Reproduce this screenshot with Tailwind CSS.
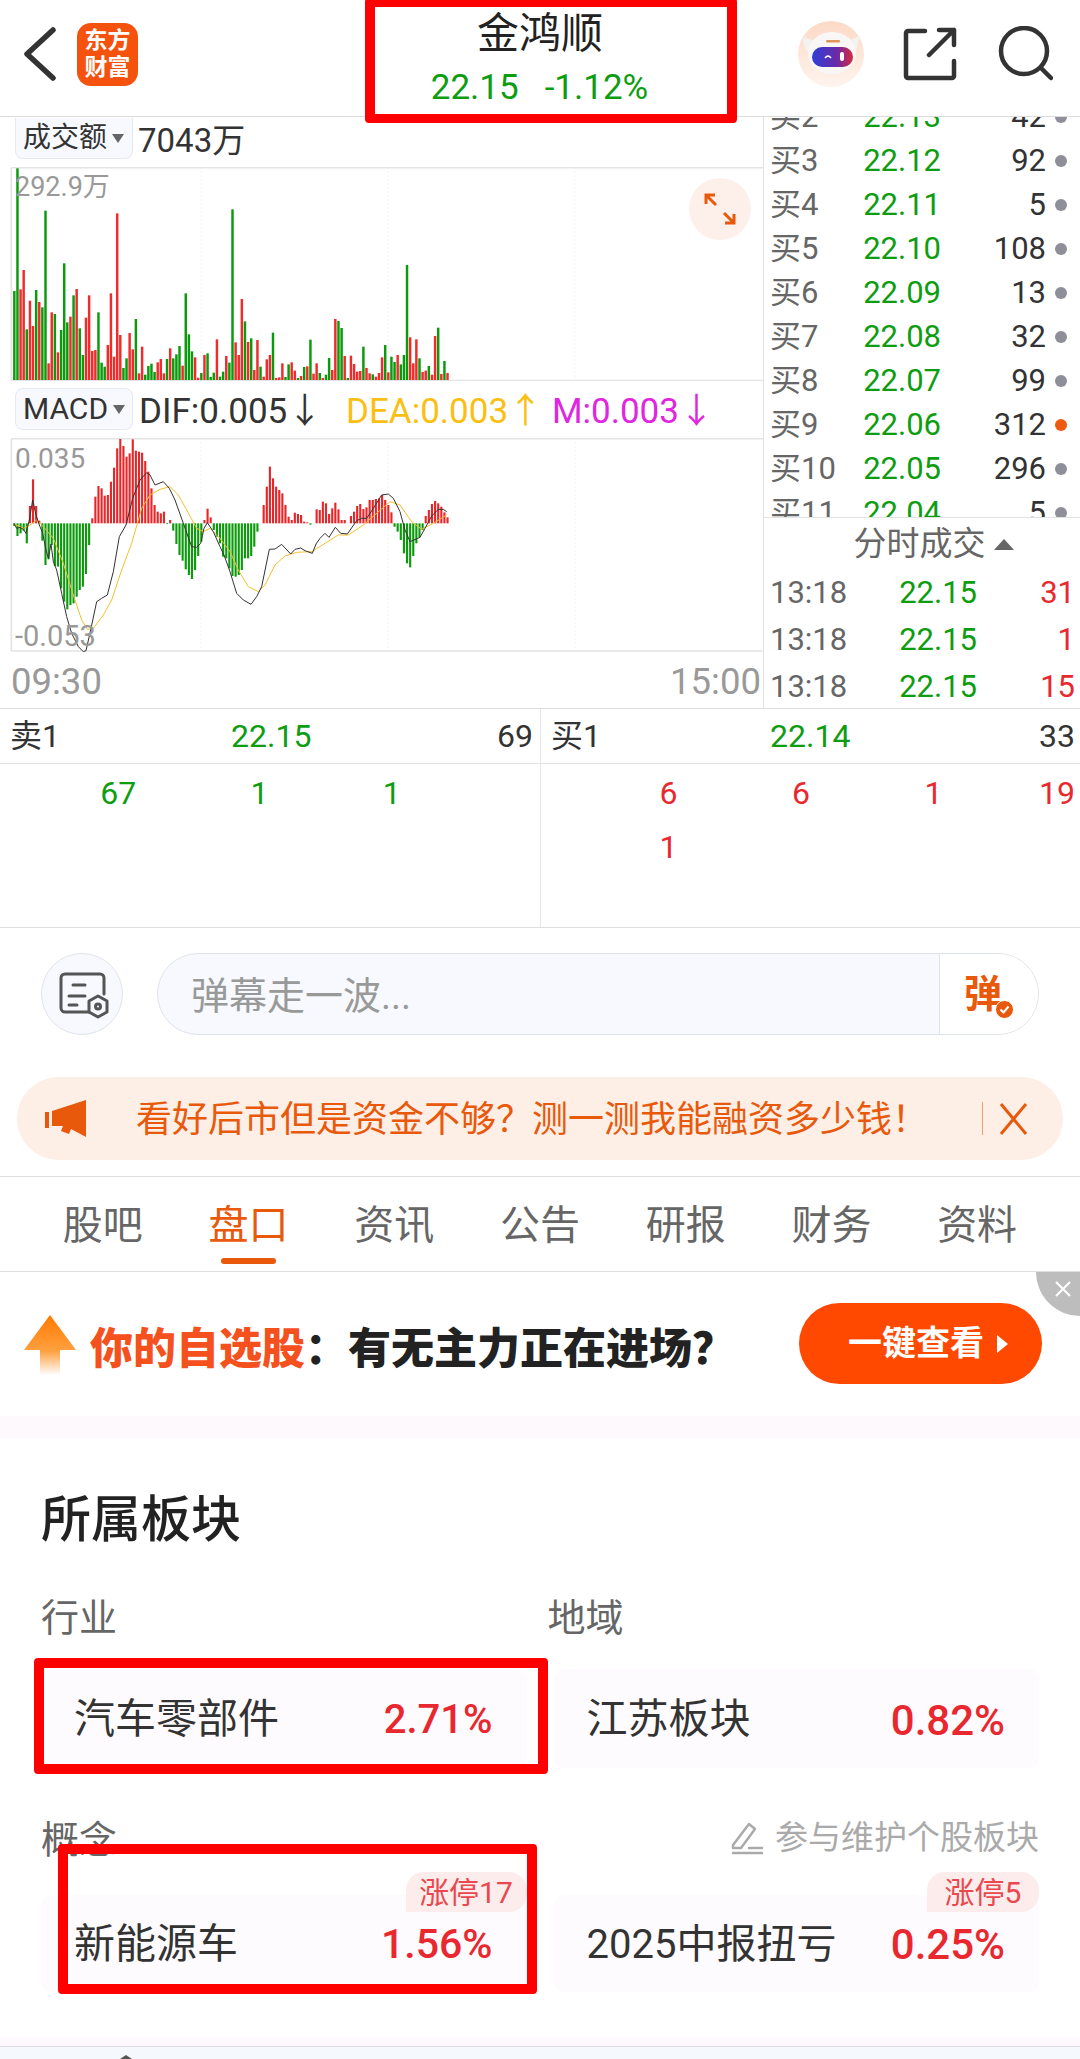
<!DOCTYPE html>
<html lang="zh-CN">
<head>
    <meta charset="UTF-8">
    <meta name="viewport" content="width=device-width, initial-scale=1.0">
    <title>金鸿顺</title>
    <script src="https://cdn.jsdelivr.net/npm/@tailwindcss/browser@4"></script>
</head>
<body class="bg-white">
<div class="relative w-[1080px] h-[2059px] overflow-hidden bg-white text-[#333] font-['Roboto','Noto_Sans_CJK_SC',sans-serif]">

    <!-- Header -->
    <header class="grid grid-cols-[365px_350px_365px] h-[117px] border-b border-[#dcdcdc]">
        <div class="flex items-center pl-[23px] pb-[8px]">
            <svg class="w-[34px] h-[54px]" viewBox="0 0 34 54" fill="none" stroke="#333" stroke-width="5.5" stroke-linecap="round" stroke-linejoin="round"><path d="M30 3 L4 27 L30 51"/></svg>
            <div class="ml-[20px] w-[61px] h-[63px] rounded-[14px] bg-[#f4520d] text-white text-[23px] font-bold leading-[27px] text-center flex flex-col justify-center"><span>东方</span><span>财富</span></div>
        </div>
        <div class="flex flex-col items-center pt-[12px]">
            <div class="text-[42px] leading-[44px] text-[#222]">金鸿顺</div>
            <div class="mt-[12px] -ml-[1px] text-[35px] leading-[40px] text-[#0e9d11]"><span>22.15</span><span class="ml-[26px]">-1.12%</span></div>
        </div>
        <div class="flex items-center justify-end pr-[27px] pb-[8px]">
            <svg class="w-[66px] h-[66px]" viewBox="0 0 66 66">
                <defs>
                    <linearGradient id="robotBg" x1="0" y1="0" x2="0" y2="1"><stop offset="0" stop-color="#fcd9c6"/><stop offset="1" stop-color="#fef4ee"/></linearGradient>
                    <linearGradient id="visor" x1="0" y1="0" x2="1" y2="0"><stop offset="0" stop-color="#2f3fd8"/><stop offset="0.6" stop-color="#6a2aa8"/><stop offset="1" stop-color="#d92a3c"/></linearGradient>
                </defs>
                <circle cx="33" cy="33" r="33" fill="url(#robotBg)"/>
                <path d="M4 16 L14 19 L52 19 L62 15 L58 30 L8 30 Z" fill="#f4f2f0"/>
                <ellipse cx="34" cy="32" rx="24" ry="21" fill="#f8f7f6"/>
                <rect x="28" y="19" width="14" height="2.5" rx="1" fill="#e0965a"/>
                <rect x="14" y="26" width="41" height="20" rx="10" fill="url(#visor)"/>
                <path d="M27 37 q3 -4 6 0" fill="none" stroke="#fff" stroke-width="1.6"/>
                <rect x="42" y="31" width="4" height="9" rx="2" fill="#fff"/>
            </svg>
            <svg class="ml-[39px] w-[54px] h-[54px]" viewBox="0 0 54 54" fill="none" stroke="#333" stroke-width="4.5" stroke-linecap="round" stroke-linejoin="round">
                <path d="M22 4 H5 a2 2 0 0 0 -2 2 V49 a2 2 0 0 0 2 2 H49 a2 2 0 0 0 2 -2 V34"/>
                <path d="M26 28 L51 3 M36 3 H51 V18"/>
            </svg>
            <svg class="ml-[40px] w-[56px] h-[56px]" viewBox="0 0 56 56" fill="none" stroke="#333" stroke-width="4.5" stroke-linecap="round"><circle cx="27" cy="25" r="23"/><path d="M44 42 L54 52"/></svg>
        </div>
    </header>

    <!-- Charts + order book -->
    <section class="flex h-[591px]">
        <div class="w-[763px] shrink-0">
            <div class="h-[50px] flex items-start pl-[15px]">
                <div class="mt-[1px] w-[118px] h-[41px] rounded-b-lg bg-[#f7f9fe] border border-t-0 border-[#e4e8f0] flex items-center pl-[7px] text-[28px] leading-none">成交额<span class="ml-[5px] w-0 h-0 border-x-[6px] border-x-transparent border-t-[9px] border-t-[#666]"></span></div>
                <span class="ml-[5px] mt-[3px] text-[33px] leading-[42px]">7043万</span>
            </div>
            <div class="relative h-[214px]">
                <svg id="volChart" class="block w-[763px] h-[214px]" viewBox="0 51 2289 642"></svg>
                <span class="absolute left-[15px] top-[5px] text-[27px] leading-[30px] text-[#999]">292.9万</span>
                <div class="absolute left-[689px] top-[11px] size-[62px] rounded-full bg-[#fdf0ea] flex items-center justify-center">
                    <svg class="size-[34px]" viewBox="0 0 34 34" fill="none" stroke="#e8590c" stroke-width="3"><path d="M3 12 V3 H12 M3 3 L13 13"/><path d="M31 22 V31 H22 M31 31 L21 21"/></svg>
                </div>
            </div>
            <div class="h-[57px] flex items-start pl-[15px]">
                <div class="mt-[7px] w-[118px] h-[42px] rounded-lg bg-[#f7f9fe] border border-[#e4e8f0] flex items-center pl-[7px] text-[30px] leading-none">MACD<span class="ml-[5px] w-0 h-0 border-x-[6px] border-x-transparent border-t-[9px] border-t-[#666]"></span></div>
                <div class="mt-[9px] ml-[6px] flex text-[35px] leading-[44px] whitespace-nowrap">
                    <span class="w-[207px]">DIF:0.005↓</span>
                    <span class="w-[206px] text-[#fbbf13]">DEA:0.003↑</span>
                    <span class="text-[#e026e0]">M:0.003↓</span>
                </div>
            </div>
            <div class="relative h-[214px]">
                <svg id="macdChart" class="block w-[763px] h-[214px]" viewBox="0 24 2289 642"></svg>
                <span class="absolute left-[15px] top-[6px] text-[28px] leading-[30px] text-[#999]">0.035</span>
                <span class="absolute left-[15px] top-[183px] text-[29px] leading-[30px] text-[#999]">-0.053</span>
            </div>
            <div class="h-[56px] flex items-center justify-between pl-[11px] pr-[2px] pt-[4px] text-[36.500px] text-[#999]"><span>09:30</span><span>15:00</span></div>
        </div>

        <div class="flex-1 border-l border-[#e2e2e2]">
            <div class="h-[401px] overflow-hidden border-b border-[#e2e2e2] text-[31px] pl-[6px]">
                <div class="-mt-[23px]">
                    <div class="grid grid-cols-[90px_81px_105px_1fr] items-center h-[44px]"><span class="text-[#666]">买2</span><span class="text-right text-[#0e9d11]">22.13</span><span class="text-right">42</span><span class="ml-[9px] size-[12px] rounded-full bg-[#8f8f99]"></span></div>
                    <div class="grid grid-cols-[90px_81px_105px_1fr] items-center h-[44px]"><span class="text-[#666]">买3</span><span class="text-right text-[#0e9d11]">22.12</span><span class="text-right">92</span><span class="ml-[9px] size-[12px] rounded-full bg-[#8f8f99]"></span></div>
                    <div class="grid grid-cols-[90px_81px_105px_1fr] items-center h-[44px]"><span class="text-[#666]">买4</span><span class="text-right text-[#0e9d11]">22.11</span><span class="text-right">5</span><span class="ml-[9px] size-[12px] rounded-full bg-[#8f8f99]"></span></div>
                    <div class="grid grid-cols-[90px_81px_105px_1fr] items-center h-[44px]"><span class="text-[#666]">买5</span><span class="text-right text-[#0e9d11]">22.10</span><span class="text-right">108</span><span class="ml-[9px] size-[12px] rounded-full bg-[#8f8f99]"></span></div>
                    <div class="grid grid-cols-[90px_81px_105px_1fr] items-center h-[44px]"><span class="text-[#666]">买6</span><span class="text-right text-[#0e9d11]">22.09</span><span class="text-right">13</span><span class="ml-[9px] size-[12px] rounded-full bg-[#8f8f99]"></span></div>
                    <div class="grid grid-cols-[90px_81px_105px_1fr] items-center h-[44px]"><span class="text-[#666]">买7</span><span class="text-right text-[#0e9d11]">22.08</span><span class="text-right">32</span><span class="ml-[9px] size-[12px] rounded-full bg-[#8f8f99]"></span></div>
                    <div class="grid grid-cols-[90px_81px_105px_1fr] items-center h-[44px]"><span class="text-[#666]">买8</span><span class="text-right text-[#0e9d11]">22.07</span><span class="text-right">99</span><span class="ml-[9px] size-[12px] rounded-full bg-[#8f8f99]"></span></div>
                    <div class="grid grid-cols-[90px_81px_105px_1fr] items-center h-[44px]"><span class="text-[#666]">买9</span><span class="text-right text-[#0e9d11]">22.06</span><span class="text-right">312</span><span class="ml-[9px] size-[12px] rounded-full bg-[#ee5a0e]"></span></div>
                    <div class="grid grid-cols-[90px_81px_105px_1fr] items-center h-[44px]"><span class="text-[#666]">买10</span><span class="text-right text-[#0e9d11]">22.05</span><span class="text-right">296</span><span class="ml-[9px] size-[12px] rounded-full bg-[#8f8f99]"></span></div>
                    <div class="grid grid-cols-[90px_81px_105px_1fr] items-center h-[44px]"><span class="text-[#666]">买11</span><span class="text-right text-[#0e9d11]">22.04</span><span class="text-right">5</span><span class="ml-[9px] size-[12px] rounded-full bg-[#8f8f99]"></span></div>
                </div>
            </div>
            <div class="h-[52px] flex items-center justify-center pl-[23px] text-[33px] text-[#666]">分时成交<span class="ml-[8px] w-0 h-0 border-x-[10px] border-x-transparent border-b-[11px] border-b-[#666]"></span></div>
            <div class="pl-[6px] pr-[5px] text-[31px]">
                <div class="grid grid-cols-[120px_87px_1fr] items-center h-[47px]"><span class="text-[#666]">13:18</span><span class="text-right text-[#0e9d11]">22.15</span><span class="text-right text-[#e8282e]">31</span></div>
                <div class="grid grid-cols-[120px_87px_1fr] items-center h-[47px]"><span class="text-[#666]">13:18</span><span class="text-right text-[#0e9d11]">22.15</span><span class="text-right text-[#e8282e]">1</span></div>
                <div class="grid grid-cols-[120px_87px_1fr] items-center h-[47px]"><span class="text-[#666]">13:18</span><span class="text-right text-[#0e9d11]">22.15</span><span class="text-right text-[#e8282e]">15</span></div>
            </div>
        </div>
    </section>

    <!-- Bid / ask ticks -->
    <section class="grid grid-cols-[541px_539px] h-[220px] border-y border-[#dedede] text-[32px]">
        <div class="border-r border-[#e6e6e6] pr-[7px]">
            <div class="flex items-center h-[55px] border-b border-[#e2e2e2] -mr-[7px] pl-[10px] pr-[7px]"><span class="w-[221px]">卖1</span><span class="text-[#0e9d11]">22.15</span><span class="ml-auto">69</span></div>
            <div class="grid grid-cols-4 auto-rows-[54px] items-center pl-[4px] pt-[2px] text-right text-[#0e9d11]"><span>67</span><span>1</span><span>1</span></div>
        </div>
        <div class="pr-[5px]">
            <div class="flex items-center h-[55px] border-b border-[#e2e2e2] -mr-[5px] pl-[10px] pr-[5px]"><span class="w-[219px]">买1</span><span class="text-[#0e9d11]">22.14</span><span class="ml-auto">33</span></div>
            <div class="grid grid-cols-4 auto-rows-[54px] items-center pl-[4px] pt-[2px] text-right text-[#e8282e]"><span>6</span><span>6</span><span>1</span><span>19</span><span>1</span></div>
        </div>
    </section>

    <!-- Danmu input -->
    <div class="flex pl-[41px] pt-[25px]">
        <div class="size-[82px] rounded-full bg-[#f7f9fe] border border-[#dfe3ea]">
            <svg class="size-[80px]" viewBox="0 0 80 80" fill="none" stroke="#555" stroke-width="3" stroke-linecap="round" stroke-linejoin="round">
                <path d="M47 58 H23 a4 4 0 0 1 -4 -4 V24 a4 4 0 0 1 4 -4 H58 a4 4 0 0 1 4 4 V40"/>
                <path d="M31 31 H43 M27 42 H43 M27 51 H35"/>
                <path d="M56 42 L65 47 V58 L56 63 L47 58 V47 Z" fill="#f7f9fe"/>
                <circle cx="56" cy="52.500" r="2.500"/>
            </svg>
        </div>
        <div class="ml-[34px] w-[882px] h-[82px] rounded-full bg-[#f7f9fe] border border-[#dfe3ea] flex overflow-hidden">
            <div class="flex-1 pl-[33px] pt-[4px] flex items-center text-[38px] text-[#999]">弹幕走一波...</div>
            <div class="relative w-[99px] bg-white border-l border-[#dfe3ea] flex items-center pl-[24px] text-[38px] font-bold text-[#e8590c]">弹
                <span class="absolute left-[55px] top-[46px] size-[19px] rounded-full bg-[#e8590c] border border-white flex items-center justify-center">
                    <svg class="size-[11px]" viewBox="0 0 11 11" fill="none" stroke="#fff" stroke-width="2"><path d="M1.500 5.500 L4.500 8.500 L9.500 2.500"/></svg>
                </span>
            </div>
        </div>
    </div>

    <!-- Promo banner -->
    <div class="mx-[17px] mt-[42px] h-[83px] rounded-full bg-[#fdeee6] flex items-center text-[#e8590c]">
        <svg class="ml-[28px] w-[42px] h-[38px] shrink-0" viewBox="0 0 42 38" fill="#e8590c"><rect x="0" y="12" width="4" height="16"/><path d="M7 11 L41 0 V37 L26 29 L24 34 L16 31 L18 26 L7 26 Z"/></svg>
        <span class="ml-[49px] pt-[3px] text-[36px] whitespace-nowrap">看好后市但是资金不够？测一测我能融资多少钱！</span>
        <span class="ml-auto w-px h-[33px] bg-[#e8a07a]"></span>
        <svg class="ml-[16px] mr-[35px] w-[29px] h-[32px] shrink-0" viewBox="0 0 29 32" fill="none" stroke="#e8590c" stroke-width="3"><path d="M2 1 L27 31 M27 1 L2 31"/></svg>
    </div>

    <!-- Tabs -->
    <nav class="mt-[16px] h-[96px] border-y border-[#dedede] grid grid-cols-7 px-[30px] text-[40px] text-[#666]">
        <div class="flex justify-center pt-[24px] leading-[50px]">股吧</div>
        <div class="relative flex justify-center pt-[24px] leading-[50px] text-[#e8590c]">盘口<span class="absolute left-[45px] top-[81px] w-[55px] h-[6px] rounded-full bg-[#e8590c]"></span></div>
        <div class="flex justify-center pt-[24px] leading-[50px]">资讯</div>
        <div class="flex justify-center pt-[24px] leading-[50px]">公告</div>
        <div class="flex justify-center pt-[24px] leading-[50px]">研报</div>
        <div class="flex justify-center pt-[24px] leading-[50px]">财务</div>
        <div class="flex justify-center pt-[24px] leading-[50px]">资料</div>
    </nav>

    <!-- Ad strip -->
    <div class="relative h-[144px] flex items-start">
        <svg class="absolute left-[23px] top-[43px] w-[54px] h-[60px]" viewBox="0 0 54 60">
            <defs><linearGradient id="upArrow" x1="0" y1="0" x2="0" y2="1"><stop offset="0" stop-color="#ff7a00"/><stop offset="0.6" stop-color="#ffa040"/><stop offset="1" stop-color="#ffffff"/></linearGradient></defs>
            <path d="M27 0 L53 35 H37 V60 H17 V35 H1 Z" fill="url(#upArrow)"/>
        </svg>
        <div class="ml-[90px] mt-[50px] text-[43px] leading-[54px] font-black whitespace-nowrap text-[#222]"><span class="text-[#f4511e]">你的自选股</span>：<span>有无主力正在进场？</span></div>
        <div class="absolute left-[799px] top-[31px] w-[243px] h-[81px] rounded-full bg-[#ff4800] flex items-center pl-[49px] text-[34px] font-bold text-white">一键查看<span class="ml-[13px] w-0 h-0 border-y-[9px] border-y-transparent border-l-[11px] border-l-white"></span></div>
        <div class="absolute right-0 top-0 w-[44px] h-[44px] rounded-bl-[44px] bg-[#bdbdbd] flex items-start justify-end pr-[8px] pt-[8px]">
            <svg class="size-[18px]" viewBox="0 0 18 18" fill="none" stroke="#fff" stroke-width="2"><path d="M2 2 L16 16 M16 2 L2 16"/></svg>
        </div>
    </div>
    <div class="h-[22px] bg-[#fdf9fd]"></div>

    <!-- Sectors -->
    <section class="px-[41px] pt-[55px]">
        <h2 class="text-[50px] leading-[54px] font-medium text-[#222]">所属板块</h2>
        <div class="mt-[49px] grid grid-cols-2 gap-x-[27px] text-[38px] leading-[44px] text-[#666]">
            <span>行业</span><span class="-ml-[6px]">地域</span>
        </div>
        <div class="mt-[29px] grid grid-cols-2 gap-x-[27px] text-[41px]">
            <div class="h-[99px] rounded-[10px] bg-[#fefbfe] flex items-center justify-between pl-[33px] pr-[34px] pt-[3px]"><span>汽车零部件</span><span class="text-[40px] font-medium text-[#e8282e]">2.71%</span></div>
            <div class="h-[99px] rounded-[10px] bg-[#fefbfe] flex items-center justify-between pl-[33px] pr-[34px] pt-[3px]"><span>江苏板块</span><span class="text-[42px] font-medium text-[#e8282e]">0.82%</span></div>
        </div>
        <div class="mt-[50px] flex items-center justify-between h-[44px]">
            <span class="text-[38px] text-[#666]">概念</span>
            <span class="flex items-center pb-[5px] text-[33px] text-[#aaa]">
                <svg class="mr-[11px] w-[34px] h-[34px]" viewBox="0 0 34 34" fill="none" stroke="#aaa" stroke-width="2.500" stroke-linejoin="round" stroke-linecap="round"><path d="M3 24 L19 3 L25 8 L11 27 H3 Z"/><path d="M3 32 H32 M19 27 H32"/></svg>
                参与维护个股板块
            </span>
        </div>
        <div class="mt-[33px] grid grid-cols-2 gap-x-[27px] text-[41px]">
            <div class="relative h-[97px] rounded-[10px] bg-[#fefbfe] flex items-center justify-between pl-[33px] pr-[34px] pt-[2px]">
                <span class="absolute right-0 -top-[23px] w-[121px] h-[40px] rounded-[18px] rounded-bl-none bg-[#fdecec] flex items-center justify-center text-[30px] text-[#e8484e]">涨停17</span>
                <span>新能源车</span><span class="text-[41px] font-medium text-[#e8282e]">1.56%</span>
            </div>
            <div class="relative h-[97px] rounded-[10px] bg-[#fefbfe] flex items-center justify-between pl-[33px] pr-[34px] pt-[2px]">
                <span class="absolute right-0 -top-[23px] w-[112px] h-[40px] rounded-[18px] rounded-bl-none bg-[#fdecec] flex items-center justify-center text-[30px] text-[#e8484e]">涨停5</span>
                <span class="text-[40px]">2025中报扭亏</span><span class="text-[42px] font-medium text-[#e8282e]">0.25%</span>
            </div>
        </div>
    </section>

    <!-- Bottom bar peek -->
    <div class="mt-[45px] h-[10px] bg-[#fdf9fd] border-b border-[#dcdce2]"></div>
    <div class="relative h-[12px] bg-[#f5f8fd]">
        <span class="absolute left-[120px] top-[8px] w-0 h-0 border-x-[6px] border-x-transparent border-b-[4px] border-b-[#555]"></span>
    </div>

    <!-- Red annotation boxes -->
    <div class="absolute left-[365px] -top-[2px] w-[372px] h-[125px] border-x-[10px] border-y-[9px] border-[#ff0000] rounded-[4px]"></div>
    <div class="absolute left-[34px] top-[1658px] w-[514px] h-[116px] border-[10px] border-[#ff0000] rounded-[4px]"></div>
    <div class="absolute left-[58px] top-[1844px] w-[479px] h-[150px] border-[10px] border-[#ff0000] rounded-[4px]"></div>
</div>

<script>
    const GREEN = '#0b9a0b';
    const RED = '#ef2b2b';
    const STEP = 9.35;

    function bar(x, y1, y2, color, width) {
        return `<path d="M${x} ${y1}V${y2}" stroke="${color}" stroke-width="${width}"/>`;
    }

    function frame(top, bottom) {
        let out = `<path d="M34 ${top}V${bottom}M34 ${top}H2289M34 ${bottom}H2289" fill="none" stroke="#e4e4e4" stroke-width="5"/>`;
        [603, 1164, 1725].forEach(x => {
            out += `<path d="M${x} ${top}V${bottom}" stroke="#e6e6e6" stroke-width="3" stroke-dasharray="3 9"/>`;
        });
        return out;
    }

    // Volume bars: colour + top edge, in units of a third of a pixel
    const vol = 'g423 g55 r418 r360 g538 r452 r528 g420 r456 g472 g182 r640 r487 g492 r607 g540 g340 g517 r500 g436 r417 g535 g615 r503 r436 r603 r600 g487 g638 g650 r585 r430 r620 r190 r555 g654 g625 r549 r598 g507 r670 r590 g674 g648 g641 g666 r637 r627 r670 g627 r595 g625 g613 g588 r647 g430 g553 g604 r622 r683 g669 r615 g610 g681 g668 r568 g680 g665 r618 g638 g178 r577 r615 r447 g514 r576 g565 r660 r570 g650 r680 r628 r615 g548 r684 r682 r640 g681 g643 r637 r662 g684 r678 g651 r649 g569 r671 r640 g669 r684 g674 g624 r660 r507 g513 g534 r618 g684 r617 r642 r665 r663 g590 r654 r670 g673 r680 r669 r622 g585 r667 g620 g636 r615 g643 g615 g345 r562 r640 r568 g625 r666 r662 g648 r674 r558 g533 r672 g633 r669'.split(' ');
    let volSvg = frame(53, 692);
    vol.forEach((v, i) => {
        volSvg += bar((43 + STEP * i).toFixed(1), v.slice(1), 690, v[0] === 'g' ? GREEN : RED, 7.4);
    });
    document.getElementById('volChart').innerHTML = volSvg;

    // MACD histogram: height above (+) or below (-) the zero line
    const hist = [-8,-38,-30,-22,-60,52,132,52,8,-52,-125,-108,-65,-128,-130,-195,-235,-258,-245,-240,-220,-200,-190,-152,-65,15,80,112,105,83,85,125,167,225,253,232,200,210,252,218,215,212,187,155,105,55,35,30,35,-2,10,-22,-62,-95,-112,-138,-155,-167,-140,-98,-55,10,44,18,-20,-40,-60,-100,-105,-135,-158,-160,-155,-140,-105,-105,-98,-70,-25,0,55,110,170,135,110,100,90,55,20,10,32,28,25,5,3,-4,0,42,40,65,60,28,45,62,42,10,10,0,22,35,52,58,43,48,70,70,73,75,85,70,55,33,-10,-25,-50,-90,-120,-132,-98,-60,-42,-20,22,40,58,67,60,50,33,18];
    const dif = '42,280 50,295 60,292 70,298 78,310 88,270 98,210 108,255 118,285 128,310 138,360 145,385 153,342 160,395 170,420 185,490 200,560 215,610 235,650 250,665 258,662 272,600 290,515 305,505 322,495 340,425 358,320 378,285 398,205 420,150 440,128 450,135 465,165 490,155 508,175 525,210 550,280 575,350 590,352 602,340 612,295 622,278 640,305 660,350 672,375 690,425 710,490 730,510 753,523 770,500 785,470 808,358 825,357 845,343 872,372 885,358 902,354 915,362 937,370 948,342 960,325 975,310 987,322 1006,292 1022,310 1042,312 1070,272 1085,265 1100,265 1120,235 1145,195 1165,192 1180,205 1200,245 1215,300 1230,335 1260,322 1275,295 1295,258 1315,238 1330,238 1340,245';
    const dea = '42,282 70,295 90,285 110,270 130,290 160,325 190,400 220,495 245,570 262,598 280,595 310,555 335,510 365,420 395,340 425,235 450,195 480,178 510,170 535,195 560,240 590,295 610,305 630,295 660,325 690,365 715,420 745,470 775,485 795,465 825,405 855,378 890,367 935,365 975,340 1015,315 1045,315 1090,285 1130,250 1170,215 1200,225 1235,275 1265,298 1300,280 1340,255';
    let macdSvg = frame(26, 663);
    hist.forEach((h, i) => {
        if (h !== 0) macdSvg += bar((43 + STEP * i).toFixed(1), 280 - h, 280, h > 0 ? '#e8262a' : GREEN, 6.4);
    });
    macdSvg += `<polyline points="${dea}" fill="none" stroke="#f5c02c" stroke-width="3"/>`;
    macdSvg += `<polyline points="${dif}" fill="none" stroke="#333" stroke-width="3"/>`;
    document.getElementById('macdChart').innerHTML = macdSvg;
</script>
</body>
</html>
